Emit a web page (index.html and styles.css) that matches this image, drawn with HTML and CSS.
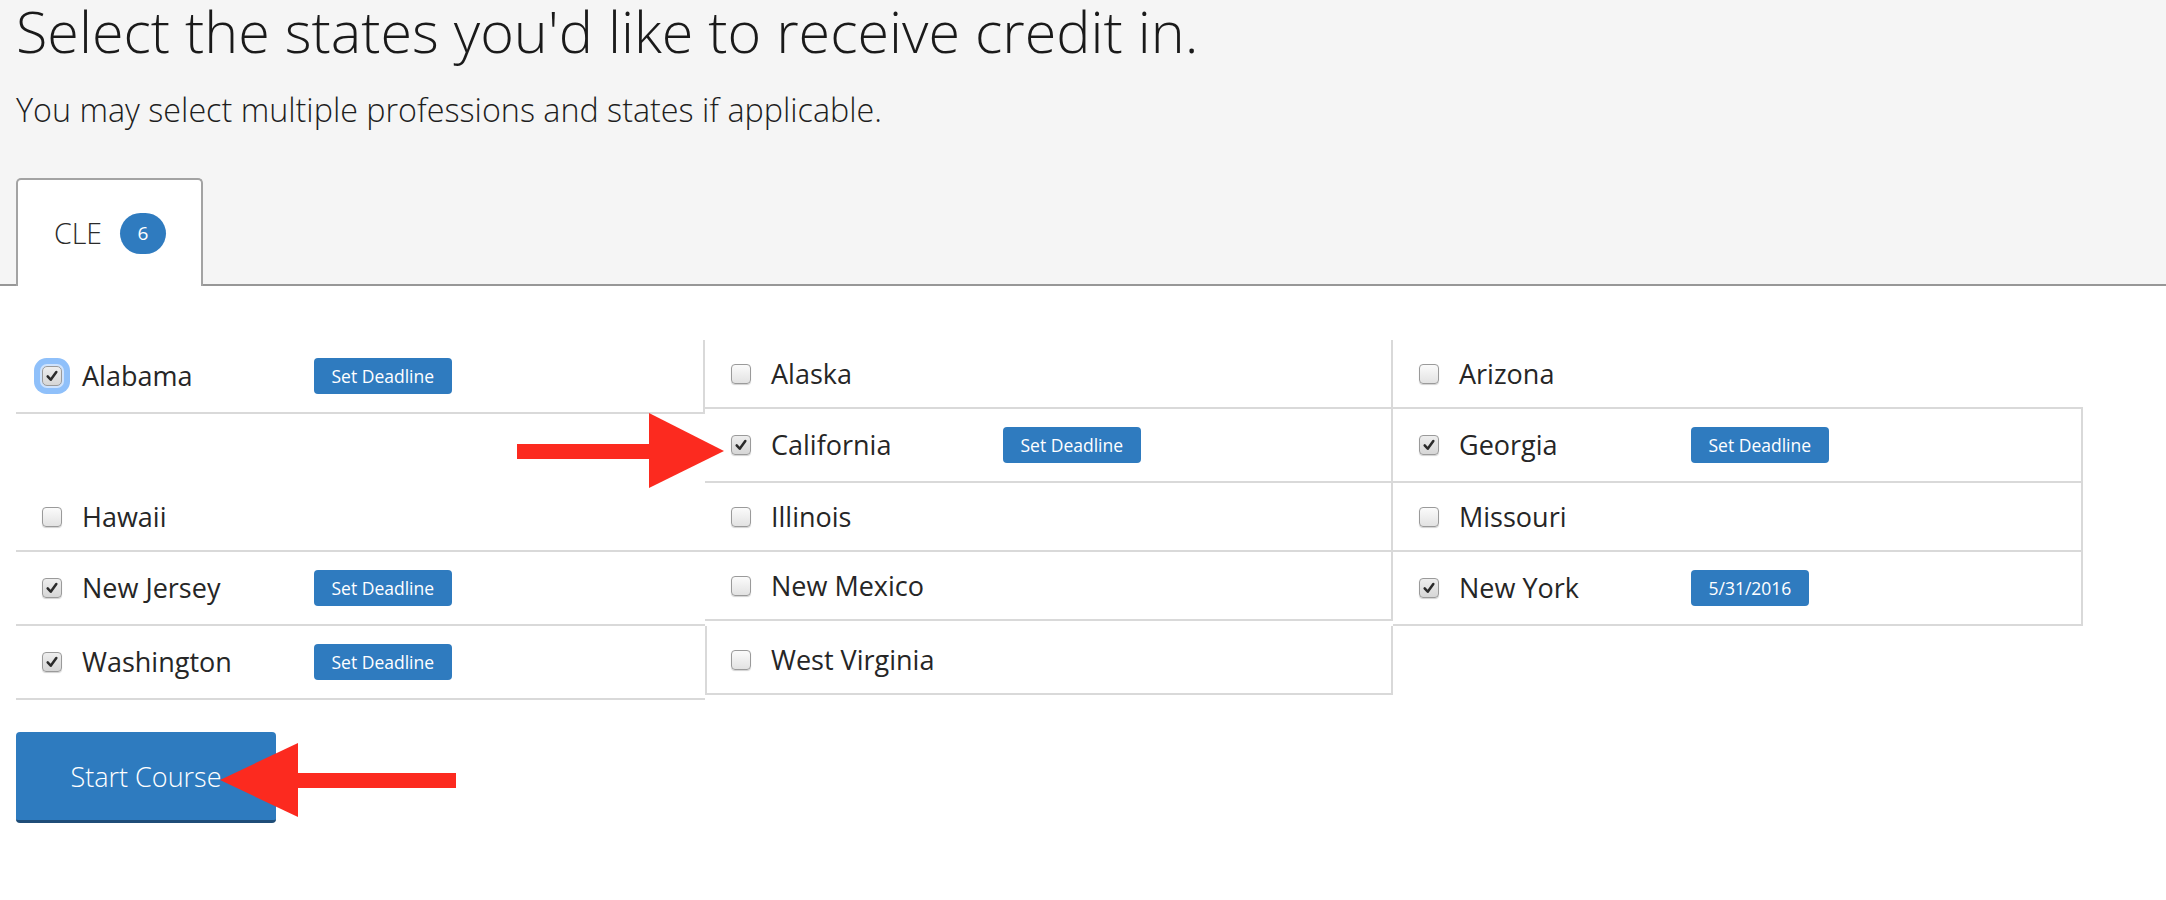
FILE: index.html
```html
<!DOCTYPE html>
<html lang="en">
<head>
<meta charset="utf-8">
<title>Select states</title>
<link rel="stylesheet" href="styles.css">
</head>
<body>
<header class="top">
  <div class="intro">
    <h1 class="title">Select the states you'd like to receive credit in.</h1>
    <p class="subtitle">You may select multiple professions and states if applicable.</p>
  </div>
  <nav class="tabs">
    <div class="tab active"><span class="tab-label">CLE</span><span class="badge">6</span></div>
  </nav>
</header>

<main class="content">
  <div class="states">
    <div class="col col-1">
      <div class="state has-btn br">
        <span class="cb checked focus"><svg viewBox="0 0 20 20"><path d="M5.2 10.4 L8.6 14.2 L14.8 5.6"/></svg></span>
        <span class="name">Alabama</span><span class="btn-sm">Set Deadline</span>
      </div>
      <div class="gap"></div>
      <div class="state">
        <span class="cb"></span><span class="name">Hawaii</span>
      </div>
      <div class="state has-btn">
        <span class="cb checked"><svg viewBox="0 0 20 20"><path d="M5.2 10.4 L8.6 14.2 L14.8 5.6"/></svg></span>
        <span class="name">New Jersey</span><span class="btn-sm">Set Deadline</span>
      </div>
      <div class="state has-btn">
        <span class="cb checked"><svg viewBox="0 0 20 20"><path d="M5.2 10.4 L8.6 14.2 L14.8 5.6"/></svg></span>
        <span class="name">Washington</span><span class="btn-sm">Set Deadline</span>
      </div>
    </div>

    <div class="col col-2">
      <div class="state br">
        <span class="cb"></span><span class="name">Alaska</span>
      </div>
      <div class="state has-btn br">
        <span class="cb checked"><svg viewBox="0 0 20 20"><path d="M5.2 10.4 L8.6 14.2 L14.8 5.6"/></svg></span>
        <span class="name">California</span><span class="btn-sm">Set Deadline</span>
      </div>
      <div class="state br">
        <span class="cb"></span><span class="name">Illinois</span>
      </div>
      <div class="state br">
        <span class="cb"></span><span class="name">New Mexico</span>
      </div>
      <div class="state br bl last">
        <span class="cb"></span><span class="name">West Virginia</span>
      </div>
    </div>

    <div class="col col-3">
      <div class="state">
        <span class="cb"></span><span class="name">Arizona</span>
      </div>
      <div class="state has-btn br">
        <span class="cb checked"><svg viewBox="0 0 20 20"><path d="M5.2 10.4 L8.6 14.2 L14.8 5.6"/></svg></span>
        <span class="name">Georgia</span><span class="btn-sm">Set Deadline</span>
      </div>
      <div class="state br">
        <span class="cb"></span><span class="name">Missouri</span>
      </div>
      <div class="state has-btn br">
        <span class="cb checked"><svg viewBox="0 0 20 20"><path d="M5.2 10.4 L8.6 14.2 L14.8 5.6"/></svg></span>
        <span class="name">New York</span><span class="btn-sm">5/31/2016</span>
      </div>
    </div>
  </div>

  <button class="start" type="button">Start Course</button>
</main>

<svg class="annotations" width="2166" height="900" viewBox="0 0 2166 900" aria-hidden="true">
  <rect x="517" y="444" width="134" height="15" fill="#fc2a1f"/>
  <polygon points="649,413 724,451 649,488" fill="#fc2a1f"/>
  <rect x="296" y="773" width="160" height="15" fill="#fc2a1f"/>
  <polygon points="298,743 220,780 298,817" fill="#fc2a1f"/>
</svg>
</body>
</html>
```

FILE: styles.css
```css
html, body {
  margin: 0;
  padding: 0;
  background: #ffffff;
}

body {
  position: relative;
  width: 2166px;
  min-height: 900px;
  font-family: "Open Sans", "DejaVu Sans", sans-serif;
  color: #222222;
  overflow: hidden;
}

.top {
  background: #f5f5f5;
}

.intro {
  padding: 0 16px;
}

.title {
  margin: 0;
  font-size: 57.5px;
  line-height: 62px;
  font-weight: 300;
  color: #1a1a1a;
}

.subtitle {
  margin: 24px 0 0;
  font-size: 32.3px;
  line-height: 47px;
  font-weight: 300;
  color: #1e1e1e;
}

.tabs {
  display: flex;
  margin-top: 45px;
  padding-left: 16px;
  border-bottom: 2px solid #979797;
}

.tab {
  box-sizing: border-box;
  height: 108px;
  margin-bottom: -2px;
  padding: 0 35px 0 36px;
  display: flex;
  align-items: center;
  gap: 18px;
  background: #ffffff;
  border: 2px solid #a3a3a3;
  border-bottom: none;
  border-radius: 5px 5px 0 0;
}

.tab-label {
  font-size: 28.5px;
  font-weight: 300;
  color: #2a2a2a;
}

.badge {
  width: 46px;
  height: 41px;
  border-radius: 21px;
  background: #2f7bbf;
  color: #ffffff;
  font-size: 19px;
  display: flex;
  align-items: center;
  justify-content: center;
}

.content {
  padding: 54px 16px 0;
}

.states {
  display: flex;
  align-items: flex-start;
}

.col {
  display: flex;
  flex-direction: column;
}

.col-1 { width: 689px; }
.col-2 { width: 688px; }
.col-3 { width: 690px; }

.gap {
  height: 69px;
}

.state {
  box-sizing: border-box;
  display: flex;
  align-items: center;
  padding: 18px 0 18px 26px;
  border-bottom: 2px solid #d9d9d9;
}

.state.br { border-right: 2px solid #d9d9d9; }
.state.bl { border-left: 2px solid #d9d9d9; }
.state.last { margin-top: 5px; padding-left: 24px; }

.name {
  width: 232px;
  font-size: 27px;
  line-height: 31px;
  font-weight: 400;
  color: #262626;
}

.has-btn .name {
  line-height: 34px;
}

.cb {
  box-sizing: border-box;
  flex: none;
  width: 20px;
  height: 20px;
  margin-right: 20px;
  border: 1px solid #9a9a9a;
  border-radius: 4px;
  background: linear-gradient(#fbfbfb, #e2e2e2);
  box-shadow: 0 1px 1px rgba(0, 0, 0, 0.18);
  display: flex;
  align-items: center;
  justify-content: center;
}

.cb.checked {
  background: linear-gradient(#eeeeee, #d6d6d6);
}

.cb svg {
  width: 18px;
  height: 18px;
}

.cb svg path {
  fill: none;
  stroke: #2b2b2b;
  stroke-width: 2.8;
  stroke-linecap: round;
  stroke-linejoin: round;
}

.cb.focus {
  border-radius: 5px;
  box-shadow: 0 0 0 2px #cfe3fd, 0 0 0 8px #8fc0fa;
}

.btn-sm {
  box-sizing: border-box;
  height: 36px;
  padding: 0 17.5px;
  display: inline-flex;
  align-items: center;
  background: #2f7bbf;
  color: #ffffff;
  font-size: 17.5px;
  border-radius: 4px;
}

.start {
  display: block;
  box-sizing: border-box;
  width: 260px;
  height: 91px;
  margin-top: 32px;
  padding: 0;
  border: none;
  border-bottom: 3px solid #1f4d78;
  border-radius: 4px;
  background: #2e7bbf;
  color: #ffffff;
  font-family: "Open Sans", "DejaVu Sans", sans-serif;
  font-size: 27px;
  font-weight: 300;
}

.annotations {
  position: absolute;
  top: 0;
  left: 0;
  pointer-events: none;
}
```
